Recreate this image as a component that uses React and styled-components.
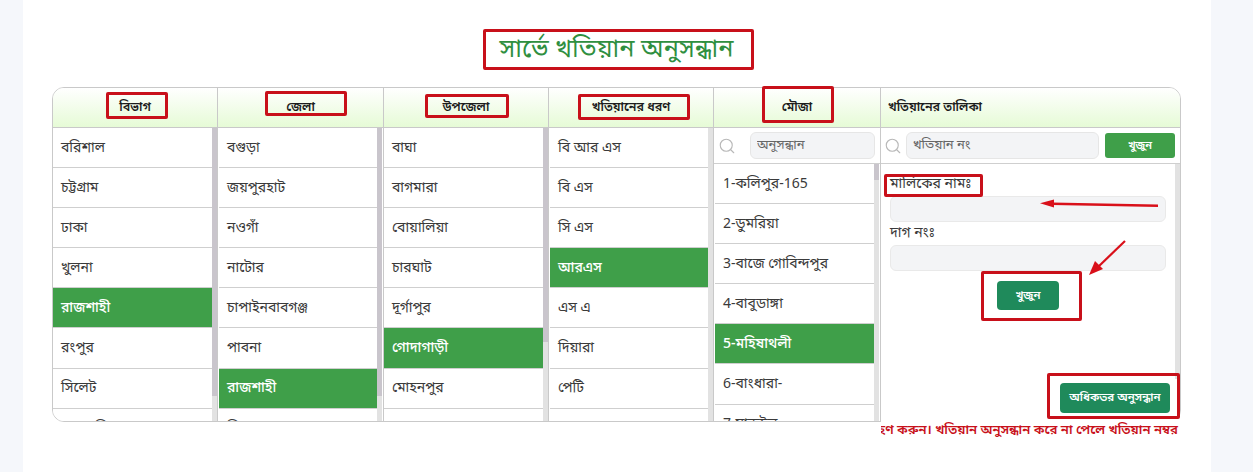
import React from "react";
import styled, { createGlobalStyle } from "styled-components";
import { Search } from "lucide-react";

const FONT = `"Noto Sans Bengali", "Lohit Bengali", "Noto Sans", "Liberation Sans", sans-serif`;

const Global = createGlobalStyle`
  html, body { margin: 0; padding: 0; background: #f5f7fb; }
  body { font-family: ${FONT}; }
  * { box-sizing: border-box; }
`;

const Page = styled.div`
  position: relative;
  width: 1253px;
  height: 472px;
  overflow: hidden;
  padding: 0 42px 0 23px;
`;
const Sheet = styled.main`
  height: 472px;
  background: #fff;
  padding: 0 30px 0 29px;
`;
const Title = styled.h1`
  height: 87px;
  margin: 0;
  padding: 31px 0 0 0;
  text-align: center;
  font-size: 25.3px;
  line-height: 40px;
  font-weight: 400;
  color: #2f8f3f;
`;
const Table = styled.section`
  display: grid;
  grid-template-columns: 165px 166px 165px 165px 167px 1fr;
  height: 335px;
  border: 1px solid #c9c9c9;
  border-radius: 12px;
  overflow: hidden;
`;
const Column = styled.div`
  display: flex;
  flex-direction: column;
  min-height: 0;
  border-right: 1px solid #c9c9c9;
`;
const LastColumn = styled(Column)`
  align-self: start;
  height: 330px;
  border-right: none;
  border-bottom: 1px solid #c9c9c9;
`;
const Head = styled.div`
  flex: 0 0 40px;
  display: flex;
  align-items: center;
  justify-content: ${(p) => (p.$left ? "flex-start" : "center")};
  padding-left: ${(p) => (p.$left ? "7px" : "0")};
  font-size: 12.5px;
  font-weight: 600;
  color: #1c1c1c;
  background: linear-gradient(180deg, #ffffff 0%, #e6fbd6 100%);
  border-bottom: 1px solid #c9c9c9;
`;
const Body = styled.div`
  flex: 1;
  min-height: 0;
  display: flex;
  overflow: hidden;
  padding: 0 ${(p) => p.$r || 0}px 0 ${(p) => p.$l || 0}px;
`;
const List = styled.ul`
  flex: 1;
  margin: 0;
  padding: 0;
  list-style: none;
  overflow: hidden;
`;
const Row = styled.li`
  height: 40.1px;
  display: flex;
  align-items: center;
  padding: 1px 0 0 8px;
  font-size: 14px;
  font-weight: ${(p) => (p.$active ? 500 : 400)};
  color: ${(p) => (p.$active ? "#fff" : "#3a3a3a")};
  background: ${(p) => (p.$active ? "#3f9f49" : "#fff")};
  border-bottom: 1px solid #cfcfcf;
`;
const Track = styled.div`
  flex: 0 0 5px;
  align-self: flex-start;
  height: ${(p) => p.$h}px;
  background: #e2e2e2;
`;
const Thumb = styled.div`
  height: ${(p) => p.$h}px;
  background: #c9c5cc;
`;
const SearchRow = styled.div`
  flex: 0 0 36px;
  display: flex;
  align-items: center;
  gap: ${(p) => p.$gap}px;
  padding: 0 5px 0 ${(p) => p.$pad}px;
  border-bottom: 1px solid #cfcfcf;
  color: #b8b8b8;
`;
const SearchInput = styled.input`
  flex: 1;
  min-width: 0;
  height: 27px;
  padding: 0 6px;
  font: 400 13px ${FONT};
  color: #555;
  background: #f3f4f6;
  border: 1px solid #e6e6e6;
  border-radius: 6px;
  &::placeholder { color: #666; }
`;
const SmallButton = styled.button`
  flex: 0 0 70px;
  height: 25px;
  margin-left: 2px;
  font: 600 11px ${FONT};
  color: #fff;
  background: #3f9f49;
  border: 0;
  border-radius: 3px;
`;
const Form = styled.form`
  flex: 1;
  display: flex;
  flex-direction: column;
  padding: 10px 5px 4px 9px;
`;
const Label = styled.label`
  height: 22px;
  font-size: 14px;
  line-height: 22px;
  color: #3a3a3a;
`;
const Field = styled.input`
  height: 26px;
  margin: 0 4px 1px 0;
  background: #f3f4f6;
  border: 1px solid #e9e9e9;
  border-radius: 6px;
`;
const ActionRow = styled.div`
  display: flex;
  justify-content: center;
  margin: 9px 4px 0 0;
`;
const ActionBtn = styled.button`
  width: ${(p) => p.$w}px;
  height: ${(p) => p.$h}px;
  font: 600 11.5px ${FONT};
  color: #fff;
  background: #1f8a5b;
  border: 0;
  border-radius: 4px;
`;
const MoreRow = styled.div`
  margin-top: auto;
  display: flex;
  justify-content: flex-end;
`;
const Notice = styled.div`
  position: relative;
  height: 25px;
  margin: -5px 0 0 829px;
  padding: 6px 3px 0 0;
  background: #fff;
  display: flex;
  justify-content: flex-end;
  overflow: hidden;
  white-space: nowrap;
  font-size: 13.2px;
  line-height: 16px;
  font-weight: 600;
  color: #c8101a;
`;
const Mark = styled.div`
  position: absolute;
  left: ${(p) => p.$x}px;
  top: ${(p) => p.$y}px;
  width: ${(p) => p.$w}px;
  height: ${(p) => p.$h}px;
  border: 3px solid #c8101a;
  border-radius: 2px;
  pointer-events: none;
`;
const Arrows = styled.svg`
  position: absolute;
  left: 0;
  top: 0;
  pointer-events: none;
`;

const cols = [
  { head: "বিভাগ", thumb: 268, l: 0, r: 0, items: ["বরিশাল", "চট্টগ্রাম", "ঢাকা", "খুলনা", "রাজশাহী", "রংপুর", "সিলেট", "ময়মনসিংহ"], active: 4 },
  { head: "জেলা", thumb: 268, l: 1, r: 1, items: ["বগুড়া", "জয়পুরহাট", "নওগাঁ", "নাটোর", "চাপাইনবাবগঞ্জ", "পাবনা", "রাজশাহী", "সিরাজগঞ্জ"], active: 6 },
  { head: "উপজেলা", thumb: 214, l: 0, r: 0, items: ["বাঘা", "বাগমারা", "বোয়ালিয়া", "চারঘাট", "দূর্গাপুর", "গোদাগাড়ী", "মোহনপুর", "পবা"], active: 5 },
  { head: "খতিয়ানের ধরণ", thumb: 0, l: 1, r: 0, items: ["বি আর এস", "বি এস", "সি এস", "আরএস", "এস এ", "দিয়ারা", "পেটি", "অন্যান্য"], active: 3 },
];
const mouza = ["1-কলিপুর-165", "2-ডুমরিয়া", "3-বাজে গোবিন্দপুর", "4-বাবুডাঙ্গা", "5-মহিষাথলী", "6-বাংধারা-", "7-মান্দইল"];
const marks = [
  [483, 29, 271, 41], [106, 92, 62, 27], [265, 91, 82, 25], [425, 94, 84, 24], [578, 94, 112, 26],
  [762, 86, 72, 37], [884, 174, 99, 23], [981, 271, 101, 50], [1047, 373, 133, 46],
];

export default function App() {
  return (
    <Page>
      <Global />
      <Sheet>
        <Title>সার্ভে খতিয়ান অনুসন্ধান</Title>
        <Table>
          {cols.map((c) => (
            <Column key={c.head}>
              <Head>{c.head}</Head>
              <Body $l={c.l} $r={c.r}>
                <List>
                  {c.items.map((t, i) => (
                    <Row key={t} $active={i === c.active}>{t}</Row>
                  ))}
                </List>
                <Track $h={300}><Thumb $h={c.thumb} /></Track>
              </Body>
            </Column>
          ))}
          <Column>
            <Head>মৌজা</Head>
            <SearchRow $gap={14} $pad={4}>
              <Search size={18} strokeWidth={1.5} />
              <SearchInput placeholder="অনুসন্ধান" />
            </SearchRow>
            <Body $l={1} $r={1}>
              <List>
                {mouza.map((t, i) => (
                  <Row key={t} $active={i === 4}>{t}</Row>
                ))}
              </List>
              <Track $h={260}><Thumb $h={16} /></Track>
            </Body>
          </Column>
          <LastColumn>
            <Head $left>খতিয়ানের তালিকা</Head>
            <SearchRow $gap={4} $pad={3}>
              <Search size={18} strokeWidth={1.5} />
              <SearchInput placeholder="খতিয়ান নং" />
              <SmallButton type="button">খুজুন</SmallButton>
            </SearchRow>
            <Body>
              <Form>
                <Label>মালিকের নামঃ</Label>
                <Field />
                <Label>দাগ নংঃ</Label>
                <Field />
                <ActionRow><ActionBtn type="button" $w={62} $h={29}>খুজুন</ActionBtn></ActionRow>
                <MoreRow><ActionBtn type="button" $w={110} $h={30}>অধিকতর অনুসন্ধান</ActionBtn></MoreRow>
              </Form>
              <Track $h={215} />
            </Body>
          </LastColumn>
        </Table>
        <Notice>অনুগ্রহ করে সহায়তা গ্রহণ করুন। খতিয়ান অনুসন্ধান করে না পেলে খতিয়ান নম্বর</Notice>
      </Sheet>
      {marks.map(([x, y, w, h]) => (
        <Mark key={`${x}-${y}`} $x={x} $y={y} $w={w} $h={h} />
      ))}
      <Arrows width="1253" height="472" viewBox="0 0 1253 472">
        <path d="M1158 205.7 L1052 203.7" stroke="#d9101a" strokeWidth="2.4" fill="none" />
        <path d="M1040 203.3 L1054 199.5 L1054 207.5 Z" fill="#d9101a" />
        <path d="M1125 241 L1098 267" stroke="#d9101a" strokeWidth="2.2" fill="none" />
        <path d="M1089 275 L1095 261 L1103 269 Z" fill="#d9101a" />
      </Arrows>
    </Page>
  );
}
